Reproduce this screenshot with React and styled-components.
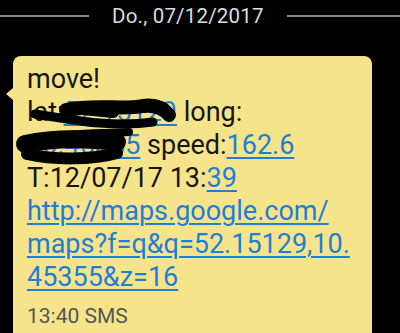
import React from "react";
import styled, { createGlobalStyle } from "styled-components";

const Global = createGlobalStyle`
  html, body { margin: 0; padding: 0; background: #000; }
  body { width: 400px; height: 333px; overflow: hidden; font-family: Roboto, "Liberation Sans", sans-serif; }
`;

const Screen = styled.div`
  width: 400px;
  height: 333px;
  background: #000;
  overflow: hidden;
  display: flex;
  flex-direction: column;
`;

const DateRow = styled.div`
  display: flex;
  align-items: center;
  gap: 23px;
  height: 32px;
`;

const Rule = styled.div`
  flex: ${(p) => (p.$w ? `0 0 ${p.$w}px` : "1")};
  height: 2px;
  background: #8a8a8a;
`;

const DateText = styled.div`
  color: #dcdcdc;
  font-size: 20.5px;
  letter-spacing: 0.2px;
`;

const Bubble = styled.div`
  position: relative;
  margin: 24px 0 0 13px;
  width: 359px;
  flex: 1;
  background: #f6e48b;
  border-radius: 8px 8px 0 0;
  padding: 7px 8px 0 14px;
  box-sizing: border-box;
  &::before {
    content: "";
    position: absolute;
    left: -7px;
    top: 32px;
    border-style: solid;
    border-width: 6px 7px 6px 0;
    border-color: transparent #f6e48b transparent transparent;
  }
`;

const Body = styled.div`
  font-size: 27px;
  line-height: 33px;
  color: #161616;
`;

const Link = styled.span`
  color: #1f7ed6;
  text-decoration: underline;
  text-decoration-thickness: 2px;
  text-underline-offset: 3px;
`;

const Meta = styled.div`
  margin-top: 10px;
  font-size: 21px;
  color: #555;
`;

const Scribble = styled.svg`
  position: absolute;
  left: 0;
  top: 0;
  pointer-events: none;
`;

export default function App() {
  return (
    <>
      <Global />
      <Screen>
        <DateRow>
          <Rule $w={89} />
          <DateText>Do., 07/12/2017</DateText>
          <Rule />
        </DateRow>
        <Bubble>
          <Body>
            move!
            <br />
            lat:<Link>52.15129</Link> long:
            <br />
            <Link>10.45355</Link> speed:<Link>162.6</Link>
            <br />
            T:12/07/17 13:<Link>39</Link>
            <br />
            <Link>
              http://maps.google.com/
              <br />
              maps?f=q&amp;q=52.15129,10.
              <br />
              45355&amp;z=16
            </Link>
          </Body>
          <Meta>13:40 SMS</Meta>
          <Scribble width="200" height="120" viewBox="0 0 200 120">
            <g fill="none" stroke="#000" strokeLinecap="round" strokeLinejoin="round">
              <path d="M 53 54 C 80 48, 110 54, 130 50 C 145 48, 152 54, 156 59" strokeWidth="14" />
              <path d="M 22 58 C 60 64, 100 72, 140 66" strokeWidth="9" />
              <path d="M 60 52 L 100 56" strokeWidth="12" />
              <path d="M 12 88 C 40 82, 70 82, 104 86" strokeWidth="18" />
              <path d="M 14 98 C 40 104, 80 104, 104 97" strokeWidth="12" />
              <path d="M 30 83 C 60 76, 90 78, 116 76" strokeWidth="8" />
            </g>
          </Scribble>
        </Bubble>
      </Screen>
    </>
  );
}
